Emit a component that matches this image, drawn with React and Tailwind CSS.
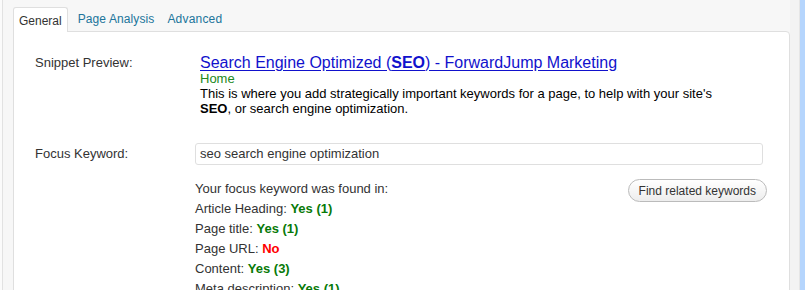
import React from "react";

const font = { fontFamily: '"Liberation Sans", Arial, sans-serif' };

function Found({ label, value, bad }) {
    return (
        <div className="h-5 leading-5">
            {label}{" "}
            <span className={bad ? "font-bold text-[#ff0000]" : "font-bold text-[#087a08]"}>{value}</span>
        </div>
    );
}

export default function App() {
    return (
        <div className="w-[805px] h-[290px] overflow-hidden flex bg-[#f7f7f7] text-[#333] text-[13px]" style={font}>
            <div className="w-[3px] bg-[#fbfbfb] border-r border-[#e2e2e2]"></div>
            <div className="w-[787px] pl-[10px] flex flex-col">
                <div className="h-[31px] shrink-0 flex items-end text-[12px]">
                    <div className="h-[25px] px-[5px] pt-px flex items-center bg-white border border-b-0 border-[#dfdfdf] rounded-t-[3px] -mb-px relative z-10 text-[#333]">General</div>
                    <div className="h-[24px] px-[10px] flex items-center text-[#21759b] tracking-[0.1px]">Page Analysis</div>
                    <div className="h-[24px] px-[3px] flex items-center text-[#21759b] tracking-[0.2px]">Advanced</div>
                </div>
                <div className="flex-1 bg-white border border-[#dfdfdf] rounded-tr-[4px] pl-[21px] pr-[26px] pt-[21px]">
                    <div className="flex">
                        <div className="w-[160px] leading-5">Snippet Preview:</div>
                        <div className="flex-1 pl-[5px]">
                            <div className="text-[16px] leading-5 text-[#1111cc] underline underline-offset-[2px]">
                                Search Engine Optimized (<b>SEO</b>) - ForwardJump Marketing
                            </div>
                            <div className="leading-[15px] text-[#228822] mt-[-2px]">Home</div>
                            <div className="leading-[15px] text-black">
                                This is where you add strategically important keywords for a page, to help with your site's<br />
                                <b>SEO</b>, or search engine optimization.
                            </div>
                        </div>
                    </div>
                    <div className="flex mt-[27px]">
                        <div className="w-[160px] leading-5 pt-[1px]">Focus Keyword:</div>
                        <div className="flex-1">
                            <div className="h-[22px] border border-[#dfdfdf] rounded-[3px] px-[4px] flex items-center text-[#333]">
                                seo search engine optimization
                            </div>
                            <div className="flex mt-[14px]">
                                <div className="flex-1">
                                    <div className="h-5 leading-5">Your focus keyword was found in:</div>
                                    <Found label="Article Heading:" value="Yes (1)" />
                                    <Found label="Page title:" value="Yes (1)" />
                                    <Found label="Page URL:" value="No" bad />
                                    <Found label="Content:" value="Yes (3)" />
                                    <Found label="Meta description:" value="Yes (1)" />
                                </div>
                                <button className="h-[23px] px-[10px] mr-[-4px] rounded-full border border-[#bbb] bg-gradient-to-b from-white to-[#ededed] text-[12px] text-[#333] leading-none">
                                    Find related keywords
                                </button>
                            </div>
                        </div>
                    </div>
                </div>
            </div>
            <div className="w-[10px] bg-[#f3f3f3] border-r border-[#e6e6e6]"></div>
            <div className="flex-1 bg-[#b5d5fd]"></div>
        </div>
    );
}
